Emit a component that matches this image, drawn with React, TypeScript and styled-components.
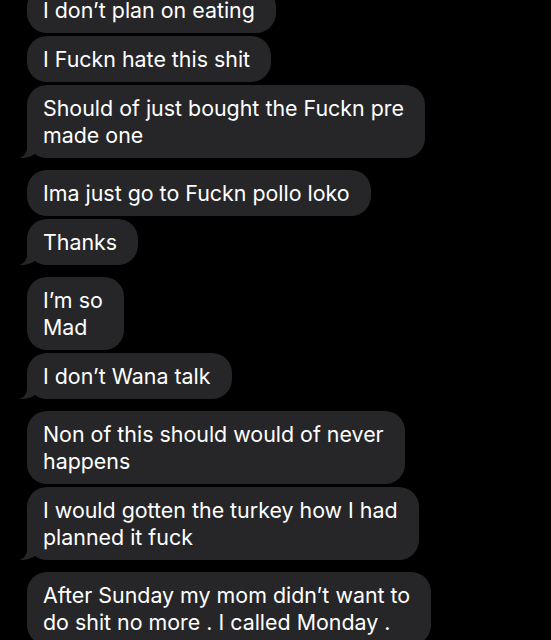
import React from 'react';
import styled, { createGlobalStyle } from 'styled-components';

const GlobalStyle = createGlobalStyle`
  html, body {
    margin: 0;
    padding: 0;
    background: #000;
  }
  body {
    font-family: Inter, "Noto Sans", sans-serif;
    -webkit-font-smoothing: antialiased;
  }
`;

type Message = { lines: string[] };

const groups: Message[][] = [
  [
    { lines: ['I don’t plan on eating'] },
    { lines: ['I Fuckn hate this shit'] },
    { lines: ['Should of just bought the Fuckn pre', 'made one'] },
  ],
  [{ lines: ['Ima just go to Fuckn pollo loko'] }, { lines: ['Thanks'] }],
  [{ lines: ['I’m so', 'Mad'] }, { lines: ['I don’t Wana talk'] }],
  [
    { lines: ['Non of this should would of never', 'happens'] },
    { lines: ['I would gotten the turkey how I had', 'planned it fuck'] },
  ],
  [{ lines: ['After Sunday my mom didn’t want to', 'do shit no more . I called Monday .'] }],
];

const Tail = () => (
  <TailSvg width="20" height="20" viewBox="0 0 20 20">
    <path d="M8 0 L8 10 C8 15 4.5 19 0 20 C6 20.6 12 18.6 16.5 15.5 L16.5 0 Z" fill="#262629" />
  </TailSvg>
);

const App: React.FC = () => {
  return (
    <>
      <GlobalStyle />
      <Screen>
        <Thread>
          {groups.map((group, gi) => (
            <Group key={gi}>
              {group.map((msg, mi) => {
                const last = mi === group.length - 1 && gi !== groups.length - 1;
                return (
                  <Bubble key={mi}>
                    {msg.lines.map((line, li) => (
                      <Line key={li}>{line}</Line>
                    ))}
                    {last && <Tail />}
                  </Bubble>
                );
              })}
            </Group>
          ))}
        </Thread>
      </Screen>
    </>
  );
};

const Screen = styled.div`
  width: 551px;
  height: 640px;
  overflow: hidden;
  background: #000;
`;

const Thread = styled.div`
  display: flex;
  flex-direction: column;
  gap: 12px;
  margin-top: -13px;
  padding-left: 27px;
`;

const Group = styled.div`
  display: flex;
  flex-direction: column;
  align-items: flex-start;
  gap: 3px;
`;

const Bubble = styled.div`
  position: relative;
  background: #262629;
  color: #fff;
  font-size: 21.4px;
  line-height: 27px;
  padding: 9.5px 21px 9.5px 16px;
  border-radius: 20px;
`;

const Line = styled.div`
  white-space: nowrap;
`;

const TailSvg = styled.svg`
  position: absolute;
  left: -8px;
  bottom: 0;
`;

export default App;
